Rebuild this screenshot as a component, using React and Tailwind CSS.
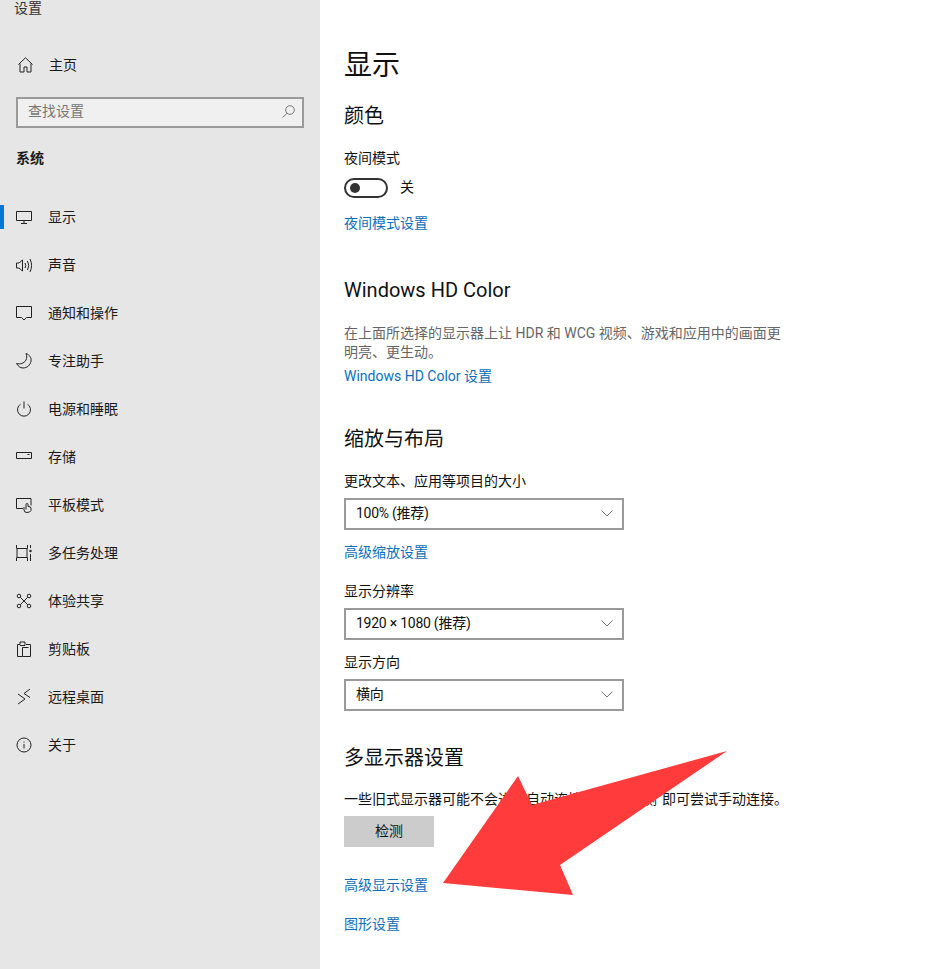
import React from 'react';

const FONT = 'font-["Roboto","Noto_Sans_CJK_SC",sans-serif]';

// Windows settings glyphs, drawn on a 16px box
const Icon = ({ children }) => (
    <svg width="16" height="16" viewBox="0 0 16 16" fill="none" stroke="#222" strokeWidth="1" className="shrink-0">
        {children}
    </svg>
);

const navItems = [
    {
        label: '显示', active: true,
        icon: <><path d="M0.500 2.500h15v9h-15z" /><path d="M8 11.500v2.500M5 14.500h6" /></>,
    },
    {
        label: '声音',
        icon: <><path d="M0.500 6v5h2.500l3.500 3V3L3 6z" /><path d="M9 6q1.500 2.500 0 5M11.500 4q2.500 4.500 0 9M14 2q3.200 6.500 0 13" /></>,
    },
    {
        label: '通知和操作',
        icon: <path d="M0.500 1.500h15v11h-5l-2.500 2.500-2.500-2.500h-5z" />,
    },
    {
        label: '专注助手',
        icon: <path d="M10 0.500C14 2 15.500 5 15 8C14.500 12 11 15 7 15C4 15 2 13 0.500 10.500C4 11.500 8 10.500 10 7C11 5 11 3 10 0.500z" />,
    },
    {
        label: '电源和睡眠',
        icon: <><path d="M8 0.500v7" /><path d="M4.500 3.200a6.500 6.500 0 1 0 7 0" /></>,
    },
    {
        label: '存储',
        icon: <><path d="M0.500 3.500h15v6h-15z" /><path d="M11.500 5.500h2" /></>,
    },
    {
        label: '平板模式',
        icon: <><path d="M7 11.500H0.500v-10h14.500v7" /><path d="M8 10v3q0 2.500 3 2.500t4-2v-2.500q0-1.500-3-1.500V7.500q0-1-1-1t-1 1v5" /></>,
    },
    {
        label: '多任务处理',
        icon: <><path d="M0.500 0v3.500h11V0M0.500 16v-3.500h11V16M1 4v8M11 4v8" /><path d="M14.500 0v3M14.500 9v7" /><circle cx="14.500" cy="6" r="1.200" fill="#222" stroke="none" /></>,
    },
    {
        label: '体验共享',
        icon: <>
            <circle cx="3" cy="3" r="1.800" /><circle cx="13" cy="3" r="1.800" />
            <circle cx="3" cy="13" r="1.800" /><circle cx="13" cy="13" r="1.800" />
            <path d="M4.300 4.300l7.400 7.400M11.700 4.300l-7.400 7.400" />
        </>,
    },
    {
        label: '剪贴板',
        icon: <><path d="M4 3.500H1.500v12h5M10 3.500h4.500v12h-8v-9h6" /><path d="M4 3.500V1h5v3.500H4" /></>,
    },
    {
        label: '远程桌面',
        icon: <path d="M2 5l7 5-7 5M14 0L8 4.500 14 8.500" />,
    },
    {
        label: '关于',
        icon: <><circle cx="8" cy="8" r="7" /><path d="M8 7v4.500M8 4.500v1" /></>,
    },
];

const NavItem = ({ item }) => (
    <div className="flex h-[48px] items-center">
        <div className={`h-[24px] w-[4px] ${item.active ? 'bg-[#0078d7]' : ''}`} />
        <div className="ml-[12px]"><Icon>{item.icon}</Icon></div>
        <span className="ml-[16px] text-[14px] text-[#1a1a1a]">{item.label}</span>
    </div>
);

const Sidebar = () => (
    <aside className="h-full w-[320px] shrink-0 overflow-hidden bg-[#e6e6e6]">
        <div className="ml-[14px] h-[16px] text-[14px] leading-[16px] text-[#333]">设置</div>
        <div className="mt-[25px] flex h-[48px] items-center pl-[18px]">
            <svg width="15" height="16" viewBox="0 0 15 16" fill="none" stroke="#222" strokeWidth="1">
                <path d="M0.500 7.500L7.500 0.800l7 6.700M2 6.500v8.500h4v-5h3v5h4V6.500" />
            </svg>
            <span className="ml-[16px] text-[14px] text-[#1a1a1a]">主页</span>
        </div>
        <div className="mx-[16px] mt-[8px] flex h-[31px] items-center justify-between border-2 border-[#9a9a9a] bg-[#f0f0f0] pb-[2px] pl-[10px] pr-[7px]">
            <span className="text-[14px] text-[#777]">查找设置</span>
            <svg width="13" height="13" viewBox="0 0 13 13" fill="none" stroke="#777" strokeWidth="1">
                <circle cx="8" cy="5" r="4.300" />
                <path d="M5 8.300L0.500 12.500" />
            </svg>
        </div>
        <div className="ml-[16px] mt-[20px] h-[20px] text-[14px] font-bold leading-[20px] text-[#1a1a1a]">系统</div>
        <nav className="mt-[25px]">
            {navItems.map((item) => <NavItem key={item.label} item={item} />)}
        </nav>
    </aside>
);

const Heading = ({ className = '', children }) => (
    <h2 className={`h-[28px] text-[20px] leading-[28px] text-[#111] ${className}`}>{children}</h2>
);

const Label = ({ className = '', children }) => (
    <div className={`h-[20px] text-[14px] leading-[20px] text-[#111] ${className}`}>{children}</div>
);

const LinkText = ({ className = '', children }) => (
    <div className={`h-[20px] text-[14px] leading-[20px] text-[#0b6fbd] ${className}`}>{children}</div>
);

const Select = ({ value }) => (
    <div className="mt-[7px] flex h-[32px] w-[280px] items-center justify-between border-2 border-[#9a9a9a] bg-white pb-[2px] pl-[10px] pr-[9px] text-[14px] text-[#111]">
        <span className="tracking-[-0.25px]">{value}</span>
        <svg width="12" height="7" viewBox="0 0 12 7" fill="none" stroke="#777" strokeWidth="1">
            <path d="M0.500 0.500L6 6l5.500-5.500" />
        </svg>
    </div>
);

const Content = () => (
    <main className="relative h-full flex-1 overflow-hidden bg-white pl-[24px] pt-[46px]">
        <h1 className="h-[40px] text-[28px] leading-[40px] text-[#111]">显示</h1>

        <Heading className="mt-[16px]">颜色</Heading>
        <Label className="mt-[18px]">夜间模式</Label>
        <div className="mt-[10px] flex h-[20px] items-center">
            <div className="flex h-[20px] w-[44px] items-center rounded-full border-2 border-[#333] pl-[4px]">
                <div className="h-[10px] w-[10px] rounded-full bg-[#333]" />
            </div>
            <span className="mb-[2px] ml-[12px] text-[14px] text-[#111]">关</span>
        </div>
        <LinkText className="mt-[15px]">夜间模式设置</LinkText>

        <Heading className="mt-[43px]">Windows HD Color</Heading>
        <p className="mt-[20px] w-[440px] text-[14px] leading-[19px] text-[#666]">
            在上面所选择的显示器上让 HDR 和 WCG 视频、游戏和应用中的画面更明亮、更生动。
        </p>
        <LinkText className="mt-[4px]">Windows HD Color 设置</LinkText>

        <Heading className="mt-[39px]">缩放与布局</Heading>
        <Label className="mt-[18px]">更改文本、应用等项目的大小</Label>
        <Select value="100% (推荐)" />
        <LinkText className="mt-[12px]">高级缩放设置</LinkText>
        <Label className="mt-[19px]">显示分辨率</Label>
        <Select value="1920 × 1080 (推荐)" />
        <Label className="mt-[12px]">显示方向</Label>
        <Select value="横向" />

        <Heading className="mt-[33px]">多显示器设置</Heading>
        <Label className="mt-[17px]">一些旧式显示器可能不会进行自动连接。选择“检测”即可尝试手动连接。</Label>
        <div className="mt-[7px] flex h-[31px] w-[90px] items-center justify-center bg-[#cccccc] text-[14px] text-[#111]">检测</div>
        <LinkText className="mt-[28px]">高级显示设置</LinkText>
        <LinkText className="mt-[19px]">图形设置</LinkText>

        {/* red annotation arrow lying over the text, coordinates are relative to main */}
        <svg className="absolute left-0 top-0" width="624" height="969" viewBox="0 0 624 969">
            <polygon fill="#ff3b3b" points="407,751 240,865 253,895 123,883 198,776 212,805" />
        </svg>
    </main>
);

export default function App() {
    return (
        <div className={`flex h-[969px] w-full overflow-hidden ${FONT}`}>
            <Sidebar />
            <Content />
        </div>
    );
}
